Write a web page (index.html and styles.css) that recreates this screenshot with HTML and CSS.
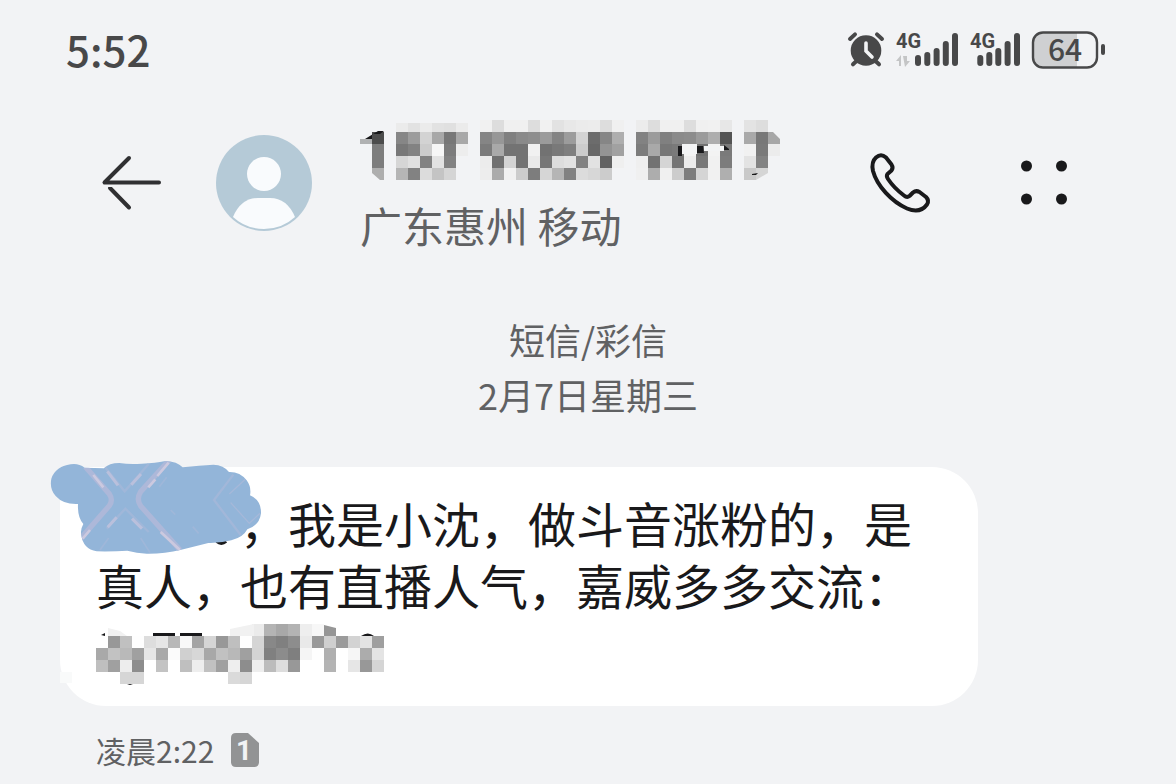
FILE: index.html
```
<!DOCTYPE html>
<html lang="zh-CN">
<head>
    <meta charset="utf-8">
    <title>短信/彩信</title>
    <link rel="stylesheet" href="styles.css">
    <script src="mosaic.js" defer></script>
</head>
<body>

    <div class="statusBar">
        <div class="clock">5:52</div>
        <div class="indicators">
            <svg width="36" height="36" viewBox="0 0 36 36">
                <circle cx="18" cy="18.5" r="15.3" fill="#484849"/>
                <path d="M2 7L7 2.4M29 2.4L34 7M8 29.5L5 32.3M28 29.5L31 32.3" class="line thick"/>
                <path d="M18 11v8l6 6" fill="none" stroke="#f2f3f5" stroke-width="3.6" stroke-linecap="round"/>
            </svg>
            <svg width="62" height="36" viewBox="0 0 62 36">
                <text x="0" y="16" class="net">4G</text>
                <path d="M0 29l5-6v11H3v-5zM7 24h2v11zM9 24v11l5-6h-3v-5z" fill="#c4c5c6"/>
                <path d="M22 26v5M31.3 23v8M40.6 19v12M49.8 12v19M59 4v27" class="line bars"/>
            </svg>
            <svg width="50" height="36" viewBox="0 0 50 36">
                <text x="0" y="16" class="net">4G</text>
                <path d="M10.3 26v5M19.3 23v8M28.3 19v12M37.6 12v19M47 4v27" class="line bars"/>
            </svg>
            <svg width="73" height="36" viewBox="0 0 73 36">
                <path d="M45 1H11Q1 1 1 11v14q0 10 10 10h34z" fill="#cfd0d2"/>
                <rect x="1" y="0.5" width="64" height="35" rx="10" class="line"/>
                <path d="M71 14v7" class="line thick"/>
                <text x="33" y="29" class="charge">64</text>
            </svg>
        </div>
    </div>

    <div class="header">
        <button type="button" class="icon back" aria-label="返回">
            <svg width="60" height="60" viewBox="0 0 60 60">
                <path d="M27 5L2.500 29.500H57M8 35L27 54.500" fill="none" stroke="#303032" stroke-width="4" stroke-linecap="round" stroke-linejoin="round"/>
                <path d="M2 32h20v2H2z" fill="#f2f3f5"/>
            </svg>
        </button>
        <svg class="avatar" width="96" height="96" viewBox="0 0 96 96">
            <circle cx="48" cy="48" r="48" fill="#b5cad7"/>
            <circle cx="48" cy="39" r="17" fill="#f9fbfd"/>
            <path d="M17 82Q25 63 42 63H54Q71 63 79 82Q66 94 48 94T17 82z" fill="#f9fbfd"/>
        </svg>
        <div class="contact">
            <svg id="number" class="number" width="420" height="60" viewBox="0 0 420 60"></svg>
            <div class="region">广东惠州 移动</div>
        </div>
        <button type="button" class="icon call" aria-label="拨打电话">
            <svg width="60" height="60" viewBox="0 0 60 60">
                <path d="M6 4.500Q11 0 16 4.500L21.500 11.500Q23.500 14.500 21.500 17.500L17.500 21Q16 23 18 26Q24 35 34 42.500Q37 45 39.500 43L43 39.500Q46 37 49.500 39L56 44Q59.500 47.500 57 51.500Q50 61 37 55.500C22 49 7 33 3 18Q1 9 6 4.500z" fill="none" stroke="#19191b" stroke-width="4" stroke-linejoin="round"/>
            </svg>
        </button>
        <button type="button" class="icon more" aria-label="更多">
            <svg width="46" height="46" viewBox="0 0 46 46" fill="#19191b">
                <circle cx="5.500" cy="6" r="5.500"/>
                <circle cx="40.500" cy="6" r="5.500"/>
                <circle cx="5.500" cy="39" r="5.500"/>
                <circle cx="40.500" cy="39" r="5.500"/>
            </svg>
        </button>
    </div>

    <div class="divider">
        <div>短信/彩信</div>
        <div>2月7日星期三</div>
    </div>

    <div class="bubble">
        <p><span class="hiddenName"></span>，我是小沈，做斗音涨粉的，是真人，也有直播人气，嘉威多多交流：</p>
        <svg id="account" class="account" width="288" height="60" viewBox="0 0 288 60"></svg>
        <svg class="scribble" width="250" height="120" viewBox="0 0 750 360">
            <path d="M530 274q14 12 28 0" fill="none" stroke="#19191b" stroke-width="10"/>
            <path id="blob" d="M92 43Q115 39 134 53L192 55Q207 39 238 39Q270 44 305 41Q350 39 372 34Q407 31 428 52Q480 46 520 44Q551 45 567 66Q600 65 620 91Q635 112 630 136Q664 150 663 190Q659 226 622 238Q610 262 574 271Q540 280 505 279Q462 290 424 299Q370 312 320 311Q290 309 262 302Q220 305 170 304Q129 297 124 255Q120 240 130 222Q112 202 114 162Q70 164 47 138Q28 117 34 86Q46 50 92 43z" fill="#93b5d9"/>
            <clipPath id="clip"><use href="#blob"/></clipPath>
            <g clip-path="url(#clip)" fill="none">
                <path d="M136 50L208 132Q220 150 208 167L120 268M388 30L302 125Q288 148 302 168L420 300" stroke="#adb8d9" stroke-width="16"/>
                <path d="M194 50L254 124L326 42M200 236L256 176L326 246" stroke="#a0b7d9" stroke-width="7"/>
                <path d="M202 64L234 106M274 104L303 72M203 232L230 202M276 206L306 236" stroke="#bac0dc" stroke-width="9"/>
                <path d="M160 75L190 112M386 38L352 78M346 88L325 112M362 246L420 300M150 240L128 266" stroke="#ccc9df" stroke-width="8"/>
                <path d="M580 74L522 150L602 255" stroke="#a2b7d9" stroke-width="7"/>
                <path d="M616 88L568 132M572 158L628 220L660 190" stroke="#a5b8d9" stroke-width="4"/>
                <path d="M206 264L180 300M302 264L330 308M380 82L358 110M458 230L476 250M392 180L406 194" stroke="#9fb7d9" stroke-width="5"/>
            </g>
        </svg>
    </div>

    <div class="meta">
        <span>凌晨2:22</span>
        <svg width="28" height="34" viewBox="0 0 28 34">
            <path d="M5 0H17L28 10V29Q28 34 23 34H5Q0 34 0 29V5Q0 0 5 0z" fill="#929394"/>
            <text x="13" y="27" class="sim">1</text>
        </svg>
    </div>

</body>
</html>
```
FILE: styles.css
```
* {box-sizing: border-box;}
body {
    background-color: #f2f3f5;
    color: #606163;
    font-family: "Noto Sans CJK SC", sans-serif;
    margin: 0;
}
svg {display: block; flex: none; overflow: visible;}
.statusBar {
    align-items: center;
    display: flex;
    height: 100px;
    justify-content: space-between;
    padding: 0 71px 0 66px;
}
.clock {
    color: #484849;
    font-size: 42px;
    font-weight: 500;
    line-height: 48px;
    padding-bottom: 3px;
}
.indicators {display: flex; gap: 12px;}
.line {fill: none; stroke: #484849; stroke-linecap: round; stroke-width: 2.4;}
.line.thick {stroke-width: 4;}
.line.bars {stroke-width: 6;}
.net, .charge {fill: #484849;}
.net {font-family: Roboto, sans-serif; font-size: 20px; font-weight: 700;}
.charge {font-size: 30px; font-weight: 500; text-anchor: middle;}

.header {
    align-items: center;
    display: flex;
    padding: 20px 109px 0 102px;
}
.icon {background: none; border: 0; cursor: pointer; flex: none; padding: 0;}
.avatar {margin-left: 54px;}
.contact {flex: 1; margin-left: 48px; min-width: 0;}
.region {
    font-size: 42px;
    line-height: 36px;
    margin-top: 27px;
    padding-bottom: 3px;
    white-space: nowrap;
}
.more {margin-left: 91px;}

.divider {
    font-size: 36px;
    line-height: 55px;
    margin: 66px 0 45px;
    text-align: center;
}

.bubble {
    background-color: #fff;
    border-radius: 0 46px 46px 46px;
    color: #19191b;
    margin: 0 198px 0 60px;
    padding: 24px 36px 22px;
    position: relative;
}
.bubble p {font-size: 48px; line-height: 62px; margin: 0;}
.hiddenName {display: inline-block; width: 144px;}
.account {margin-top: 9px;}
.scribble {left: -20px; position: absolute; top: -17px;}

.meta {
    align-items: center;
    display: flex;
    font-size: 30px;
    gap: 17px;
    line-height: 44px;
    margin: 22px 60px 0 96px;
}
.sim {
    fill: #f2f3f5;
    font-family: Roboto, sans-serif;
    font-size: 28px;
    font-weight: 700;
    text-anchor: middle;
}
```
FILE: mosaic.js
```
// grey level of each 12px cell, ".." is an empty cell
var number = [
    ".. .. .. eb e2 eb e2 e0 eb .. f1 dd f0 f0 dd f1 e2 e8 eb ec dd f0 .. ec dd f0 f0 dd f0 f1 e7 .. e3 dd ..",
    ".. 4c .. 86 9c d3 a8 77 a8 .. 85 97 80 8a 8e 9b 84 9c d3 6c 86 ae .. 82 9b 80 8a 8c 9b ae 54 .. a9 78 a7",
    ".. 7d .. 78 82 cc f6 7c ed .. 7b a9 73 73 f1 72 79 7f cc 68 94 a1 .. 7c a9 77 7a f3 72 f3 7a .. f1 7a ec",
    ".. 7d .. d6 e0 82 e2 82 .. .. ec 70 d3 73 e9 77 dd e2 82 e2 62 ef .. ef 72 d5 75 ec 78 f1 7c .. e3 83 ..",
    ".. ae .. b5 82 dc c4 d5 .. .. ed ab f1 cc 7d d6 b5 82 dc d7 cc .. .. f0 ad f0 cc 7d d5 f1 af .. c9 d5 .."
];
var account = [
    ".. .. .. .. .. .. .. .. .. .. .. .. .. eb b4 a8 b3 ee f7 .. .. .. .. ..",
    ".. 98 c0 fe dd e6 b8 f8 a4 d5 98 bf fe d5 88 80 8d e9 99 cf 9b d3 e3 9f",
    "a9 c2 b9 a0 e6 a9 fb d0 d7 a8 c1 b8 a0 d4 80 8c 7f f5 fe af ff f6 ac e4",
    "bf a0 ed 8d ff c3 ff bf ee c1 a0 ee 8d ee bc dd 98 ff ff b4 ff e6 98 d5",
    ".. .. d6 d6 .. .. .. .. .. .. .. da d6 .. .. .. .. .. .. .. .. .. .. .."
];

function cells(rows) {
    var out = "";
    rows.forEach(function (row, y) {
        row.split(" ").forEach(function (c, x) {
            if (c === "..") return;
            out += '<rect x="' + x * 12 + '" y="' + y * 12 +
                '" width="12" height="12" fill="#' + c + c + c + '"/>';
        });
    });
    return '<g shape-rendering="crispEdges">' + out + '</g>';
}

// pieces of the digits left uncovered around the cells
document.getElementById("number").innerHTML = cells(number) +
    '<path d="M0 19h12v5H0z" fill="#b0b1b2"/>' +
    '<path d="M5 19L18 11H24L20 14H12V19z" fill="#19191b"/>' +
    '<path d="M12 53L20 60H12zM408 12h5l7 7v-7h-7zM396 60L408 53V60z" fill="#f2f3f5"/>' +
    '<path d="M24 0h12v3H24zM36 0h72v3H36z" fill="#f2f3f5"/>' +
    '<path d="M318 26h4v10h-4zM337 26h6l1 7h-7zM364 25l5 4v1h-5zM392 54l6-1-2 2h-4z" fill="#19191b"/>' +
    '<path d="M322 24h15v10h-15zM344 26h20v5h-20z" fill="#f3f4f5"/>';
document.getElementById("account").innerHTML = cells(account) +
    '<path d="M12 4l12 3 7 5H12zM134 12V5l24-5v12z" fill="#f1f1f1"/>' +
    '<path d="M228 1l12 3v8h-12z" fill="#969696"/>' +
    '<path d="M57 9h22v3H57zM84 9h22v3H84zM265 12q7-5 13 0zM5 11l4-2v3zM31 60h6l-3 1z" fill="#19191b"/>' +
    '<path d="M-36 48h12v11h-12z" fill="#f9fafa"/>';
```
